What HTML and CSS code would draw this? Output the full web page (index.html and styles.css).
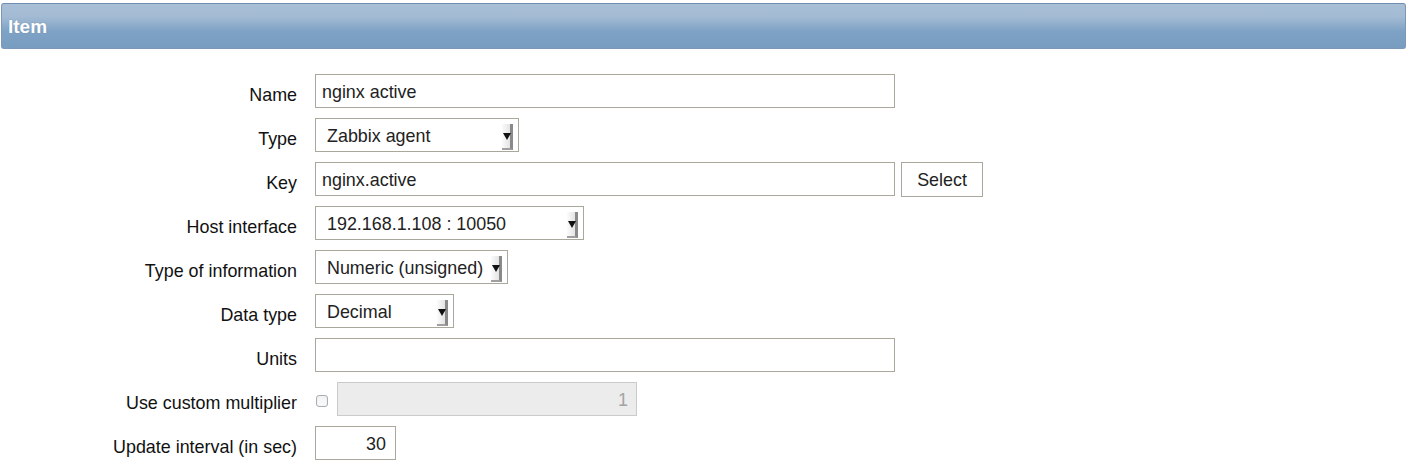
FILE: index.html
```html
<!DOCTYPE html>
<html>
<head>
<meta charset="utf-8">
<link rel="stylesheet" href="styles.css">
</head>
<body>
<div class="header">Item</div>
<div class="form">
  <div class="label">Name</div>
  <div class="field"><div class="input wide">nginx active</div></div>

  <div class="label">Type</div>
  <div class="field"><div class="select w-type">Zabbix agent<span class="arrow"></span></div></div>

  <div class="label">Key</div>
  <div class="field"><div class="input wide">nginx.active</div><div class="button">Select</div></div>

  <div class="label">Host interface</div>
  <div class="field"><div class="select w-host">192.168.1.108 : 10050<span class="arrow"></span></div></div>

  <div class="label">Type of information</div>
  <div class="field"><div class="select w-info">Numeric (unsigned)<span class="arrow"></span></div></div>

  <div class="label">Data type</div>
  <div class="field"><div class="select w-data">Decimal<span class="arrow"></span></div></div>

  <div class="label">Units</div>
  <div class="field"><div class="input wide"></div></div>

  <div class="label">Use custom multiplier</div>
  <div class="field"><span class="checkbox"></span><div class="input disabled">1</div></div>

  <div class="label">Update interval (in sec)</div>
  <div class="field"><div class="input num">30</div></div>
</div>
</body>
</html>
```
FILE: styles.css
```css
html, body {
  margin: 0;
  padding: 0;
  background: #fff;
}
body {
  font-family: "Liberation Sans", Arial, sans-serif;
  font-size: 17.9px;
  color: #111;
}
.header {
  margin: 3px 3px 0 1px;
  height: 46px;
  box-sizing: border-box;
  border: 1px solid #7d98b6;
  border-top-color: #6f8db0;
  border-radius: 3px;
  background: linear-gradient(to bottom, #a8bfd6 0%, #a2bad3 30%, #7ea2c5 62%, #789dc1 100%);
  color: #fff;
  font-weight: bold;
  font-size: 19px;
  line-height: 46px;
  padding-left: 6px;
  text-shadow: 0 0 1px rgba(60, 80, 110, 0.4);
}
.form {
  display: grid;
  grid-template-columns: 297px auto;
  column-gap: 18px;
  row-gap: 10px;
  margin-top: 25px;
}
.label {
  text-align: right;
  height: 34px;
  line-height: 34px;
  padding-top: 4px;
  box-sizing: border-box;
  white-space: nowrap;
}
.field {
  display: flex;
  align-items: center;
  height: 34px;
}
.input, .select, .button {
  box-sizing: border-box;
  height: 34px;
  border: 1px solid #aaa89c;
  background: #fff;
  color: #222;
  line-height: 34px;
  white-space: nowrap;
}
.input {
  padding: 0 6px;
}
.wide {
  width: 580px;
}
.button {
  width: 82px;
  margin-left: 6px;
  height: 35px;
  text-align: center;
  line-height: 35px;
}
.select {
  display: flex;
  align-items: center;
  justify-content: space-between;
  padding: 2px 5px 0 11px;
}
.w-type { width: 204px; }
.w-host { width: 269px; }
.w-info { width: 193px; }
.w-data { width: 139px; }
.arrow {
  position: relative;
  flex: none;
  width: 8px;
  height: 24px;
  margin-top: 2px;
  background: linear-gradient(to right, #fbfbfb, #e4e4e4);
  border-right: 3px solid #8a8a8a;
  border-bottom: 2px solid #a0a0a0;
}
.arrow::after {
  content: "";
  position: absolute;
  left: 1px;
  top: 9px;
  border-left: 4px solid transparent;
  border-right: 4px solid transparent;
  border-top: 7px solid #111;
}
.checkbox {
  box-sizing: border-box;
  width: 12px;
  height: 12px;
  margin: 4px 9px 0 1px;
  border: 1px solid #a9aeb3;
  border-radius: 3px;
  background: linear-gradient(to bottom, #f2f3f3, #fafafa);
  box-shadow: inset 0 0 1px #dde;
}
.disabled {
  width: 300px;
  background: #ececec;
  border-color: #cbcbcb;
  color: #a3a3a3;
  text-align: right;
  padding-right: 8px;
}
.num {
  width: 81px;
  text-align: right;
  padding-right: 9px;
}
```
